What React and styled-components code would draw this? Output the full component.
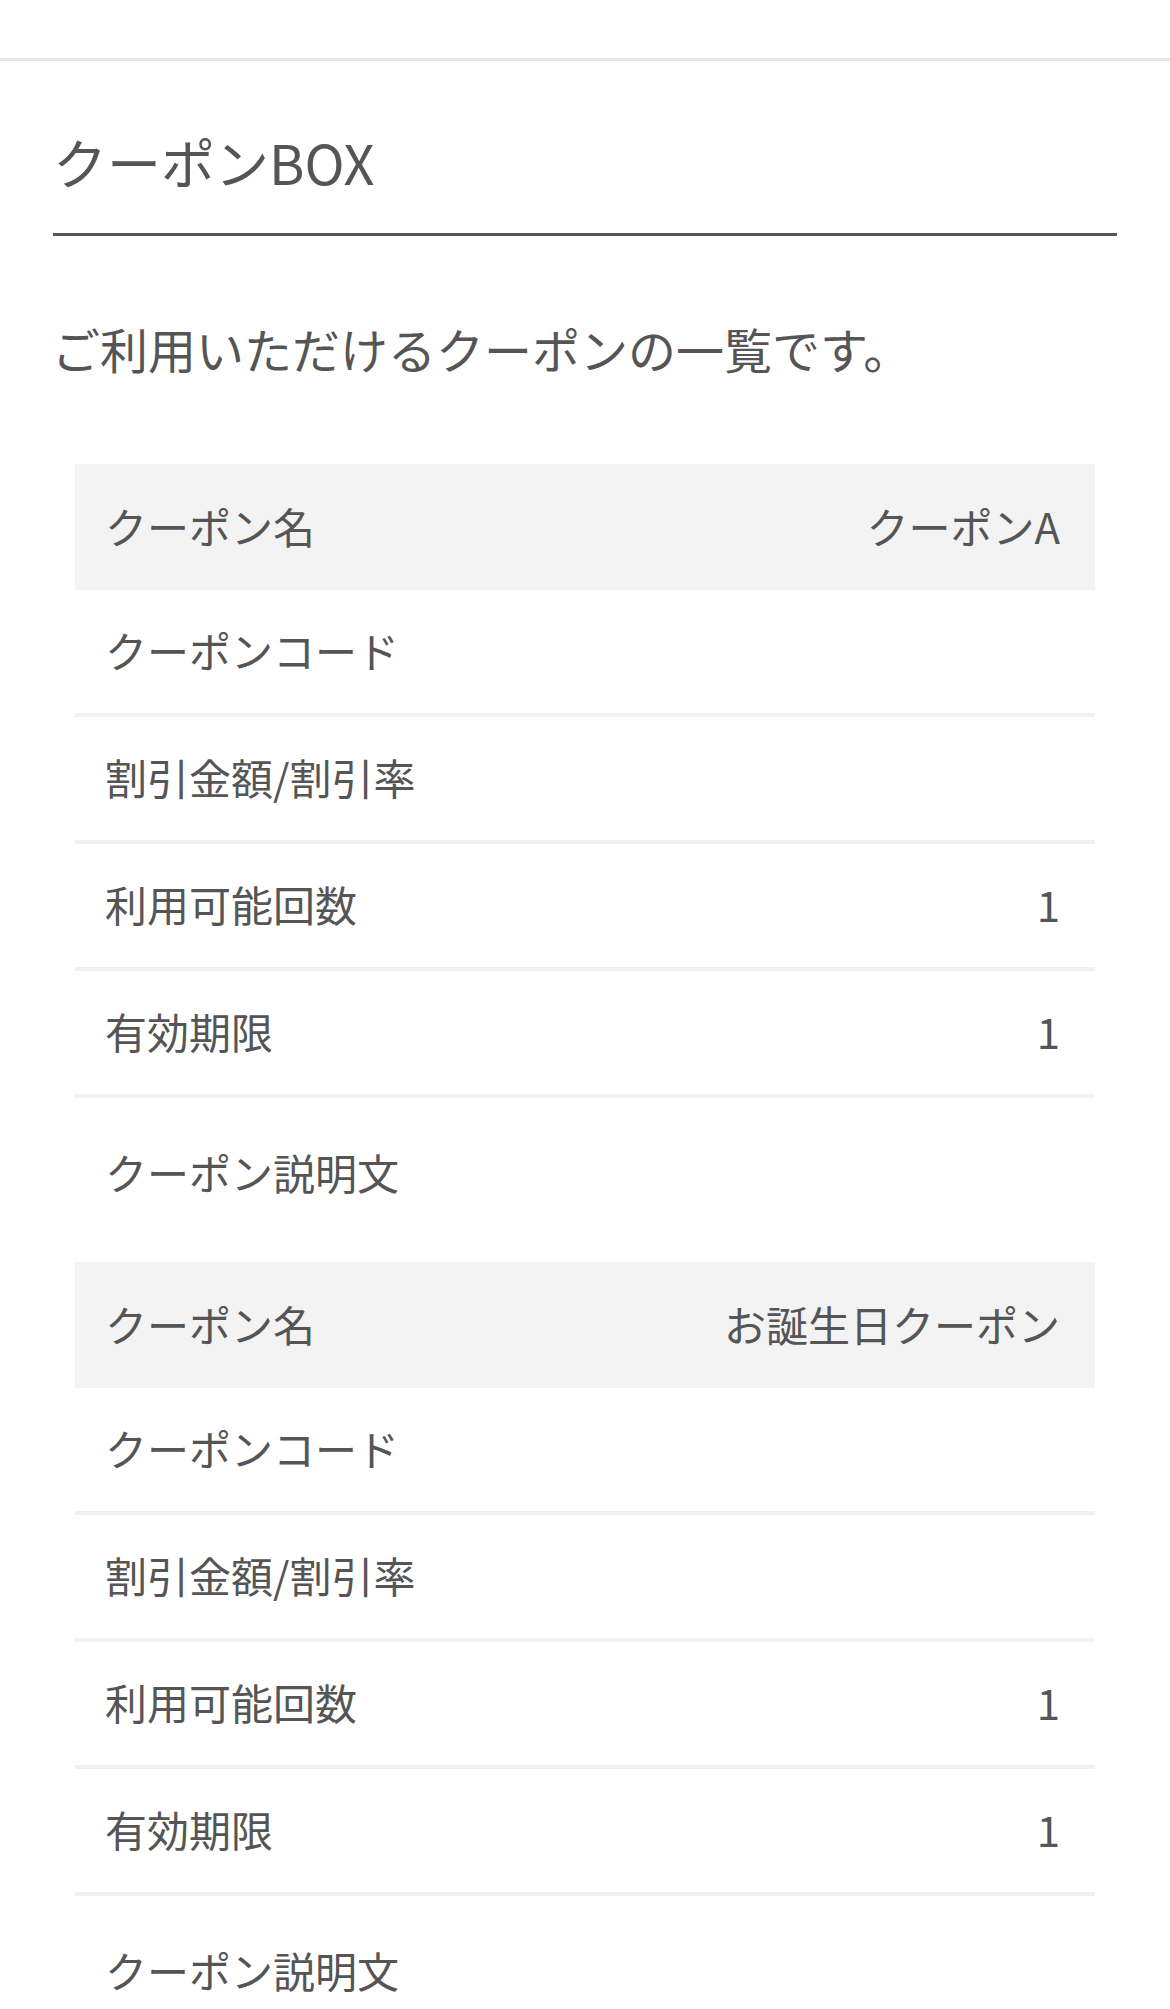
import React from 'react'
import styled, { createGlobalStyle } from 'styled-components'

const GlobalStyle = createGlobalStyle`
  html, body {
    margin: 0;
    padding: 0;
    background: #fff;
  }
  body {
    font-family: "Noto Sans CJK JP", "Noto Sans", sans-serif;
    color: #555;
    -webkit-font-smoothing: antialiased;
  }
  * {
    box-sizing: border-box;
  }
`

const TopBar = styled.header`
  height: 61px;
  border-bottom: 3px solid #e6e6e6;
`

const Main = styled.main`
  padding: 0 53px 0 52px;
`

const Title = styled.h1`
  margin: 60px 0 0 1px;
  padding-bottom: 31px;
  border-bottom: 3px solid #555;
  font-size: 54px;
  line-height: 81px;
  font-weight: 400;
  color: #555;
`

const Lead = styled.p`
  margin: 76px 0 80px;
  font-size: 48px;
  line-height: 72px;
  color: #555;
`

const Table = styled.dl`
  margin: 0 22px 0 23px;
`

const Row = styled.div`
  display: flex;
  justify-content: space-between;
  align-items: center;
  padding: 0 35px 4px 30px;
  font-size: 42px;
  line-height: 63px;
  height: ${p => (p.$head ? '126px' : '127px')};
  background: ${p => (p.$head ? '#f3f3f3' : '#fff')};
  border-bottom: ${p => (p.$head ? 'none' : '4px solid #f1f1f1')};
`

const DescRow = styled.div`
  padding: 42px 35px 0 30px;
  height: 164px;
  font-size: 42px;
  line-height: 63px;
`

const Label = styled.dt`
  margin: 0;
`

const Value = styled.dd`
  margin: 0;
  text-align: right;
`

const coupons = [
  { name: 'クーポンA', code: '', discount: '', uses: '1', expiry: '1' },
  { name: 'お誕生日クーポン', code: '', discount: '', uses: '1', expiry: '1' },
]

const CouponTable = ({ coupon }) => (
  <Table>
    <Row $head>
      <Label>クーポン名</Label>
      <Value>{coupon.name}</Value>
    </Row>
    <Row>
      <Label>クーポンコード</Label>
      <Value>{coupon.code}</Value>
    </Row>
    <Row>
      <Label>割引金額/割引率</Label>
      <Value>{coupon.discount}</Value>
    </Row>
    <Row>
      <Label>利用可能回数</Label>
      <Value>{coupon.uses}</Value>
    </Row>
    <Row>
      <Label>有効期限</Label>
      <Value>{coupon.expiry}</Value>
    </Row>
    <DescRow>
      <Label>クーポン説明文</Label>
    </DescRow>
  </Table>
)

export default function App() {
  return (
    <>
      <GlobalStyle />
      <TopBar />
      <Main>
        <Title>クーポンBOX</Title>
        <Lead>ご利用いただけるクーポンの一覧です。</Lead>
        {coupons.map(c => (
          <CouponTable key={c.name} coupon={c} />
        ))}
      </Main>
    </>
  )
}
